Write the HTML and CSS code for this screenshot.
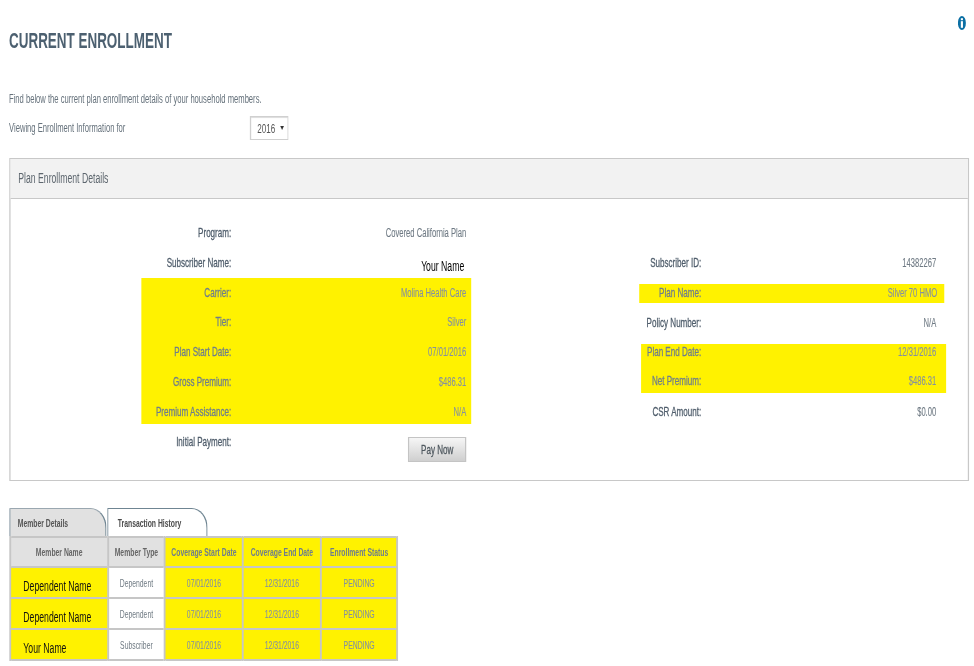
FILE: index.html
```html
<!DOCTYPE html>
<html lang="en">
<head>
<meta charset="utf-8">
<title>Current Enrollment</title>
<link rel="stylesheet" href="styles.css">
</head>
<body>
<div class="frame">
<main class="page">
  <header class="top">
    <h1 class="title">CURRENT ENROLLMENT</h1>
    <svg class="info" viewBox="0 0 12 14" preserveAspectRatio="none" aria-label="Information">
      <ellipse cx="6" cy="7" rx="6" ry="7" fill="#0b6fa4"/>
      <rect x="4.4" y="2.2" width="3.2" height="2" fill="#fff"/>
      <rect x="4.4" y="5.2" width="3.2" height="6.6" fill="#fff"/>
    </svg>
  </header>
  <p class="intro">Find below the current plan enrollment details of your household members.</p>
  <div class="viewing">
    <span class="viewing-label">Viewing Enrollment Information for</span>
    <div class="select">2016<span class="caret"></span></div>
  </div>

  <section class="panel">
    <h2 class="panel-head">Plan Enrollment Details</h2>
    <div class="panel-body">
      <div class="col col-left">
        <div class="row"><span class="label">Program:</span><span class="value">Covered California Plan</span></div>
        <div class="row"><span class="label">Subscriber Name:</span><span class="value name"><span class="name-inner">Your Name</span></span></div>
        <div class="hl">
          <div class="row"><span class="label">Carrier:</span><span class="value">Molina Health Care</span></div>
          <div class="row"><span class="label">Tier:</span><span class="value">Silver</span></div>
          <div class="row"><span class="label">Plan Start Date:</span><span class="value">07/01/2016</span></div>
          <div class="row"><span class="label">Gross Premium:</span><span class="value">$486.31</span></div>
          <div class="row row-short"><span class="label">Premium Assistance:</span><span class="value">N/A</span></div>
        </div>
        <div class="row row-pay"><span class="label">Initial Payment:</span><button class="pay" type="button">Pay Now</button></div>
      </div>
      <div class="col col-right">
        <div class="row"><span class="label">Subscriber ID:</span><span class="value">14382267</span></div>
        <div class="hl band-name">
          <div class="row"><span class="label">Plan Name:</span><span class="value">Silver 70 HMO</span></div>
        </div>
        <div class="row"><span class="label">Policy Number:</span><span class="value">N/A</span></div>
        <div class="hl band-end">
          <div class="row"><span class="label">Plan End Date:</span><span class="value">12/31/2016</span></div>
          <div class="row"><span class="label">Net Premium:</span><span class="value">$486.31</span></div>
        </div>
        <div class="row"><span class="label">CSR Amount:</span><span class="value">$0.00</span></div>
      </div>
    </div>
  </section>

  <nav class="tabs">
    <div class="tab tab-active">Member Details</div>
    <div class="tab">Transaction History</div>
  </nav>
  <table class="members">
    <colgroup>
      <col class="c-name"><col class="c-type"><col class="c-date"><col class="c-date"><col class="c-status">
    </colgroup>
    <thead>
      <tr>
        <th class="gray">Member Name</th>
        <th class="gray">Member Type</th>
        <th class="yellow">Coverage Start Date</th>
        <th class="yellow">Coverage End Date</th>
        <th class="yellow">Enrollment Status</th>
      </tr>
    </thead>
    <tbody>
      <tr>
        <td class="yellow person">Dependent Name</td><td class="type">Dependent</td>
        <td class="yellow">07/01/2016</td><td class="yellow">12/31/2016</td><td class="yellow">PENDING</td>
      </tr>
      <tr>
        <td class="yellow person">Dependent Name</td><td class="type">Dependent</td>
        <td class="yellow">07/01/2016</td><td class="yellow">12/31/2016</td><td class="yellow">PENDING</td>
      </tr>
      <tr>
        <td class="yellow person">Your Name</td><td class="type">Subscriber</td>
        <td class="yellow">07/01/2016</td><td class="yellow">12/31/2016</td><td class="yellow">PENDING</td>
      </tr>
    </tbody>
  </table>
</main>
</div>
</body>
</html>
```
FILE: styles.css
```css
html, body { margin: 0; padding: 0; background: #fff; }

.frame { width: 974px; height: 666px; overflow: hidden; }

/* The reference is a wide page squeezed horizontally: lay out wide, then scale X.
   --u is one reference pixel, horizontally, before the scale. */
.page {
  --u: calc(1px / .62);
  width: calc(970 * var(--u));
  box-sizing: border-box;
  padding: 16px 0 0 calc(9 * var(--u));
  transform: scaleX(.62);
  transform-origin: 0 0;
  font-family: "Liberation Sans", Arial, sans-serif;
  font-size: 12.3px;
  color: #66727c;
  filter: blur(.4px);
}

.top { display: flex; justify-content: space-between; align-items: flex-end; height: 37px; width: calc(960 * var(--u)); }
.title { margin: 0; font-size: 21.7px; line-height: 24px; font-weight: bold; color: #4c6070; }
.info { align-self: flex-start; margin-right: calc(3 * var(--u)); flex: none; width: calc(8 * var(--u)); height: 14px; }

.intro { margin: 38px 0 0; line-height: 16px; }
.viewing { display: flex; align-items: center; margin-top: 9px; height: 24px; }
.viewing-label { width: calc(241 * var(--u)); }
.select {
  width: calc(38 * var(--u)); height: 24px; box-sizing: border-box; display: flex; align-items: center;
  padding-left: calc(6 * var(--u)); gap: calc(5 * var(--u)); background: #fff; color: #555;
  border: 1px solid #d0d0d0; border-left-width: 2px; box-shadow: inset 0 1px 1px #ddd;
  font-size: 13px;
}
.caret { width: 0; height: 0; border-left: 3px solid transparent; border-right: 3px solid transparent; border-top: 4px solid #333; }

.panel { width: calc(960 * var(--u)); margin-top: 18px; box-sizing: border-box; border: 1px solid #c8c8c8; border-left-width: 2px; border-right-width: 2px; }
.panel-head {
  margin: 0; height: 40px; line-height: 38px; padding-left: calc(8 * var(--u)); box-sizing: border-box;
  background: #f2f2f2; border-bottom: 1px solid #c8c8c8;
  font-size: 14px; font-weight: normal; color: #5d666e;
}
.panel-body { display: flex; padding: 19px 0 0 calc(131 * var(--u)); height: 281px; box-sizing: border-box; }

.col { flex: none; }
.col-left { width: calc(330 * var(--u)); }
.col-right { width: calc(305 * var(--u)); margin-left: calc(170 * var(--u)); padding-top: 30px; }

.row { display: flex; height: 29.8px; line-height: 30px; }
.label { flex: none; width: calc(90 * var(--u)); text-align: right; font-size: 13px; color: #4f5d6b; -webkit-text-stroke: .3px #4f5d6b; }
.value { flex: 1; text-align: right; padding-right: calc(5 * var(--u)); color: #6f7a84; -webkit-text-stroke: .1px #6f7a84; }
.col-right .label { width: calc(60 * var(--u)); }
.col-right .value { padding-right: calc(10 * var(--u)); }

.hl { display: flow-root; background: #fff200; }
.hl .label { color: #6d7d8d; -webkit-text-stroke-color: #6d7d8d; }
.hl .value { color: #8490a0; -webkit-text-stroke-color: #8490a0; }
.row-short { height: 26.8px; }
.row-pay { margin-top: 3px; height: 38px; }

.name.value { -webkit-text-stroke: 0; }
.name-inner { display: inline-block; margin-right: calc(2 * var(--u)); margin-top: 5px; line-height: 26px; color: #000; font-size: 14px; }
.pay {
  margin: 10px calc(5 * var(--u)) 0 auto; width: calc(58 * var(--u)); height: 25px; padding: 0;
  font: 13px "Liberation Sans", Arial, sans-serif; color: #4f585f; -webkit-text-stroke: .3px #4f585f;
  background: linear-gradient(#f6f6f6, #cfcfcf);
  border: 1px solid #c4c4c4; border-left-width: 2px; border-right-width: 2px;
}

.band-name { height: 19px; margin: 6px calc(2 * var(--u)) 5px calc(-2 * var(--u)); }
.band-name .row { margin-top: -5.9px; }
.col-right .band-name .label { width: calc(62 * var(--u)); }
.col-right .band-name .value { padding-right: calc(7 * var(--u)); }
.band-end { height: 49px; margin: 6px 0 4px; }
.band-end .row:first-child { margin-top: -7px; }

.tabs { display: flex; margin-top: 27px; height: 28px; padding-left: calc(.5 * var(--u)); }
.tab {
  width: calc(100 * var(--u)); box-sizing: border-box; padding-left: calc(9 * var(--u)); line-height: 29px;
  border: 1px solid #6f8592; border-left-width: 2px; border-right-width: 2px; border-bottom: 0;
  border-radius: 0 calc(16 * var(--u)) 0 0 / 0 20px 0 0;
  font-size: 11px; font-weight: bold; color: #4a4a4a; background: #fff;
}
.tab-active { width: calc(97 * var(--u)); padding-left: calc(7 * var(--u)); margin-right: calc(1 * var(--u)); background: #e1e1e1; border-top-color: #9aa7b0; color: #555; }

.members { border-collapse: collapse; table-layout: fixed; width: calc(387 * var(--u)); margin-left: calc(.5 * var(--u)); font-size: 11px; }
.c-name { width: calc(97.5 * var(--u)); }
.c-type { width: calc(57 * var(--u)); }
.c-date { width: calc(78 * var(--u)); }
.c-status { width: calc(76.5 * var(--u)); }
.members th, .members td {
  box-sizing: border-box; height: 31px; line-height: 14px;
  border-style: solid; border-color: #c6c6c6; border-width: 2px 3px; padding: 0; text-align: center;
}
.members th { height: 30px; font-weight: bold; }
.gray { background: #e1e1e1; color: #666; }
.yellow { background: #fff200; color: #8490a0; -webkit-text-stroke: .1px #8490a0; }
th.yellow { color: #6d7d8d; -webkit-text-stroke: 0; }
.type { background: #fff; color: #6f7a83; }
.members .person { color: #111; font-size: 14px; text-align: left; padding-left: calc(12 * var(--u)); padding-top: 7px; -webkit-text-stroke: 0; }
```
